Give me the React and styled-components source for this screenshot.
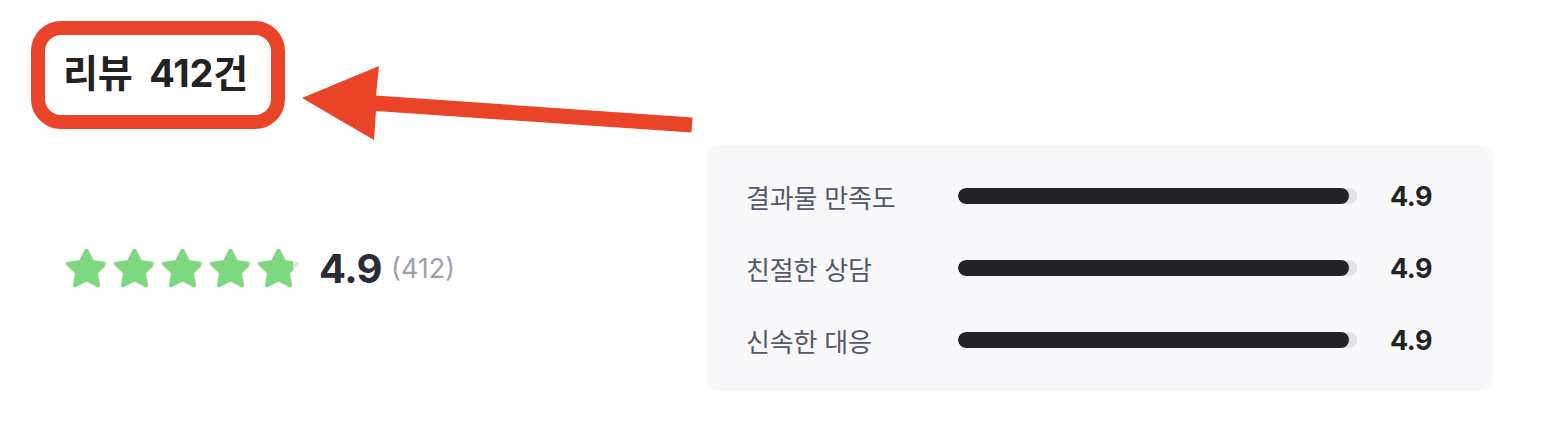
import React from 'react';
import styled, { createGlobalStyle } from 'styled-components';

const GlobalStyle = createGlobalStyle`
  html, body {
    margin: 0;
    padding: 0;
    background: #ffffff;
  }
  body {
    font-family: "Inter", "Noto Sans CJK KR", sans-serif;
  }
`;

const Page = styled.div`
  position: relative;
  width: 1568px;
  height: 424px;
  box-sizing: border-box;
  padding: 21px 0 0 31px;
`;

const TitleBox = styled.div`
  box-sizing: border-box;
  width: 254px;
  height: 108px;
  border: 14px solid #e94328;
  border-radius: 30px;
  display: flex;
  align-items: center;
  padding: 0 0 4px 18px;
`;

const Title = styled.h2`
  margin: 0;
  font-size: 38px;
  font-weight: 700;
  line-height: 1;
  color: #222222;
  word-spacing: 8px;
  letter-spacing: -0.2px;
`;

const ArrowSvg = styled.svg`
  position: absolute;
  left: 295px;
  top: 55px;
`;

const Body = styled.div`
  display: flex;
  align-items: center;
  margin-top: 16px;
`;

const Summary = styled.div`
  width: 675px;
  display: flex;
  align-items: center;
  padding-left: 33px;
  box-sizing: border-box;
`;

const Stars = styled.div`
  display: flex;
  gap: 3px;
`;

const Score = styled.span`
  margin-left: 18px;
  font-size: 40px;
  font-weight: 700;
  color: #2a2b38;
  letter-spacing: -0.5px;
`;

const Count = styled.span`
  margin-left: 9px;
  font-size: 27px;
  color: #a0a0ac;
`;

const Panel = styled.div`
  box-sizing: border-box;
  width: 787px;
  height: 246px;
  padding: 15px 40px;
  background: #f8f8fb;
  border-radius: 14px;
`;

const Row = styled.div`
  display: grid;
  grid-template-columns: 212px 399px auto;
  align-items: center;
  height: 72px;
`;

const Label = styled.span`
  font-size: 26px;
  color: #555868;
  letter-spacing: -0.2px;
`;

const Track = styled.div`
  height: 16px;
  border-radius: 8px;
  background: #e2e2ea;
  overflow: hidden;
`;

const Fill = styled.div`
  height: 100%;
  border-radius: 8px;
  background: #222326;
`;

const Value = styled.span`
  padding-left: 33px;
  font-size: 27px;
  font-weight: 700;
  color: #222222;
  letter-spacing: -0.5px;
`;

const STAR = '12,2.6 15.09,8.6 21.8,9.5 17,14.2 18.1,20.9 12,17.7 5.9,20.9 7,14.2 2.2,9.5 8.91,8.6';

const Star = ({ fill, id }) => (
  <svg width="45" height="45" viewBox="0 0 24 24">
    <defs>
      <linearGradient id={id} x1="0" x2="1" y1="0" y2="0">
        <stop offset={fill} stopColor="#7ed882" />
        <stop offset={fill} stopColor="#e3e3ea" />
      </linearGradient>
    </defs>
    <polygon
      points={STAR}
      fill={`url(#${id})`}
      stroke={`url(#${id})`}
      strokeWidth="2.2"
      strokeLinejoin="round"
    />
  </svg>
);

const scores = [
  { label: '결과물 만족도', value: 4.9 },
  { label: '친절한 상담', value: 4.9 },
  { label: '신속한 대응', value: 4.9 },
];

const rating = 4.9;

export default function App() {
  return (
    <Page>
      <GlobalStyle />
      <TitleBox>
        <Title>리뷰 412건</Title>
      </TitleBox>

      <ArrowSvg width="405" height="95" viewBox="0 0 405 95">
        <polygon fill="#e94328" points="7,43 84,11 81,40.5 397.5,62.5 396.5,77.5 81,56 79,85" />
      </ArrowSvg>

      <Body>
        <Summary>
          <Stars>
            {[0, 1, 2, 3, 4].map((i) => {
              const part = Math.max(0, Math.min(1, rating - i));
              return <Star key={i} id={`star-${i}`} fill={part === 1 ? 1 : 0.9} />;
            })}
          </Stars>
          <Score>4.9</Score>
          <Count>(412)</Count>
        </Summary>

        <Panel>
          {scores.map((s) => (
            <Row key={s.label}>
              <Label>{s.label}</Label>
              <Track>
                <Fill style={{ width: `${(s.value / 5) * 100}%` }} />
              </Track>
              <Value>{s.value}</Value>
            </Row>
          ))}
        </Panel>
      </Body>
    </Page>
  );
}
